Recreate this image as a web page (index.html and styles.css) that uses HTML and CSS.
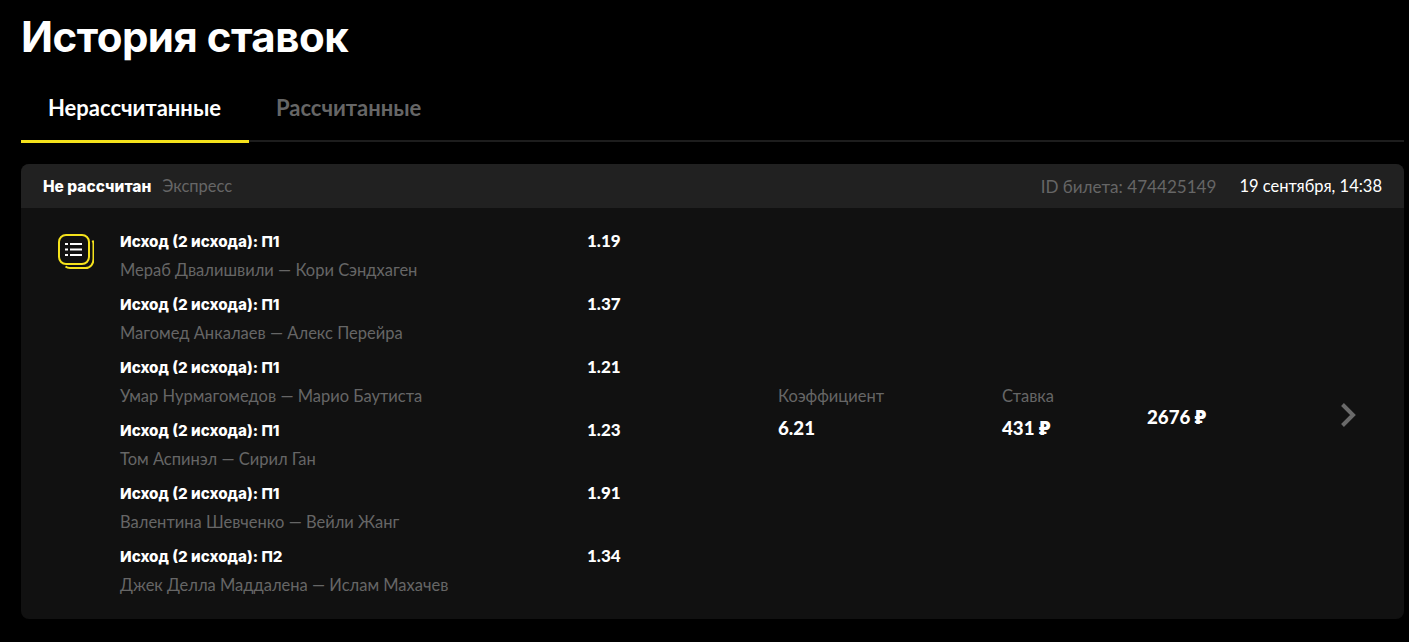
FILE: index.html
```html
<!DOCTYPE html>
<html lang="ru">
<head>
<meta charset="utf-8">
<title>История ставок</title>
<link rel="stylesheet" href="styles.css">
</head>
<body>
<h1 class="title">История ставок</h1>
<nav class="tabs">
  <a class="tab tab-active">Нерассчитанные</a>
  <a class="tab">Рассчитанные</a>
</nav>
<section class="card">
  <header class="card-head">
    <strong class="status">Не рассчитан</strong>
    <span class="type">Экспресс</span>
    <span class="ticket">ID билета: 474425149</span>
    <span class="date">19 сентября, 14:38</span>
  </header>
  <div class="card-body">
    <svg class="list-icon" width="36" height="36" viewBox="0 0 36 36" fill="none">
      <path d="M34.500 6.500c.6 1 1 2.200 1 3.500v15c0 4.700-3 9-8 9H12c-2 0-3.300-.5-4.500-1.500" stroke="#f5e21c" stroke-width="2"/>
      <rect x="1" y="1" width="30" height="29" rx="7" fill="#111" stroke="#f5e21c" stroke-width="2"/>
      <path d="M12 10h12M12 15.500h12M12 21h12" stroke="#fff" stroke-width="2.200"/>
      <path d="M7 10h3M7 15.500h3M7 21h3" stroke="#fff" stroke-width="2.200"/>
    </svg>
    <ul class="bets">
      <li class="bet"><div class="bet-text"><b class="outcome">Исход (2 исхода): П1</b><span class="match">Мераб Двалишвили — Кори Сэндхаген</span></div><b class="odds">1.19</b></li>
      <li class="bet"><div class="bet-text"><b class="outcome">Исход (2 исхода): П1</b><span class="match">Магомед Анкалаев — Алекс Перейра</span></div><b class="odds">1.37</b></li>
      <li class="bet"><div class="bet-text"><b class="outcome">Исход (2 исхода): П1</b><span class="match">Умар Нурмагомедов — Марио Баутиста</span></div><b class="odds">1.21</b></li>
      <li class="bet"><div class="bet-text"><b class="outcome">Исход (2 исхода): П1</b><span class="match">Том Аспинэл — Сирил Ган</span></div><b class="odds">1.23</b></li>
      <li class="bet"><div class="bet-text"><b class="outcome">Исход (2 исхода): П1</b><span class="match">Валентина Шевченко — Вейли Жанг</span></div><b class="odds">1.91</b></li>
      <li class="bet"><div class="bet-text"><b class="outcome">Исход (2 исхода): П2</b><span class="match">Джек Делла Маддалена — Ислам Махачев</span></div><b class="odds">1.34</b></li>
    </ul>
    <div class="stat stat-coef"><span class="stat-label">Коэффициент</span><b class="stat-value">6.21</b></div>
    <div class="stat stat-stake"><span class="stat-label">Ставка</span><b class="stat-value">431 ₽</b></div>
    <b class="total">2676 ₽</b>
    <svg class="chevron" width="18" height="26" viewBox="0 0 18 26" fill="none"><path d="M2.500 2.500l10.500 10.500-10.500 10.500" stroke="#6a6a6a" stroke-width="4"/></svg>
  </div>
</section>
</body>
</html>
```
FILE: styles.css
```css
* { box-sizing: border-box; }
html, body { margin: 0; padding: 0; }
body {
  background: #000;
  color: #fff;
  font-family: "Lato", "Noto Sans", sans-serif;
  padding: 0 5px 0 21px;
  height: 642px;
  overflow: hidden;
}
.title {
  margin: 0;
  padding-top: 9px;
  font: 700 42px/56px "Inter", sans-serif;
  letter-spacing: -0.5px;
}
.tabs {
  display: flex;
  margin-top: 11px;
  height: 66px;
  border-bottom: 2px solid #1d1d1d;
}
.tab {
  height: 67px;
  padding: 0 28px 0 27px;
  font-size: 22px;
  font-weight: 700;
  line-height: 64px;
  color: #666;
}
.tab-active {
  color: #fff;
  border-bottom: 3px solid #f5e21c;
}
.card {
  margin-top: 22px;
  height: 455px;
  background: #111;
  border-radius: 8px;
  overflow: hidden;
}
.card-head {
  display: flex;
  align-items: center;
  height: 44px;
  padding: 0 22px;
  background: #212121;
  font-size: 16px;
}
.status {
  font-family: "Inter", sans-serif;
  font-size: 15.500px;
  font-weight: 800;
}
.type { margin-left: 11px; color: #666; font-size: 16.500px; }
.ticket { margin-left: auto; color: #666; font-size: 17.100px; }
.date { margin-left: 23px; font-size: 16.500px; }
.card-body {
  display: flex;
  align-items: center;
  height: 411px;
  padding: 0 46px 0 37px;
}
.list-icon { align-self: flex-start; margin-top: 26px; flex: none; }
.bets {
  list-style: none;
  margin: 0 0 0 26px;
  padding: 21px 0 0;
  width: 658px;
  align-self: flex-start;
}
.bet { display: flex; height: 63px; }
.bet-text { display: flex; flex-direction: column; width: 467px; }
.outcome {
  font-family: "Inter", sans-serif;
  font-size: 15.200px;
  font-weight: 800;
  line-height: 26px;
}
.match { margin-top: 3px; font-size: 16.500px; line-height: 24px; color: #666; }
.odds { font-size: 17px; font-weight: 900; line-height: 24px; }
.stat { display: flex; flex-direction: column; margin-bottom: 4px; }
.stat-coef { width: 224px; }
.stat-stake { width: 145px; }
.stat-label { font-size: 16.500px; line-height: 24px; color: #666; }
.stat-value { margin-top: 8px; font-size: 18.700px; font-weight: 900; line-height: 24px; }
.total { margin-top: 6px; font-size: 18.700px; font-weight: 900; }
.chevron { margin-left: auto; margin-top: 3px; flex: none; }
```
